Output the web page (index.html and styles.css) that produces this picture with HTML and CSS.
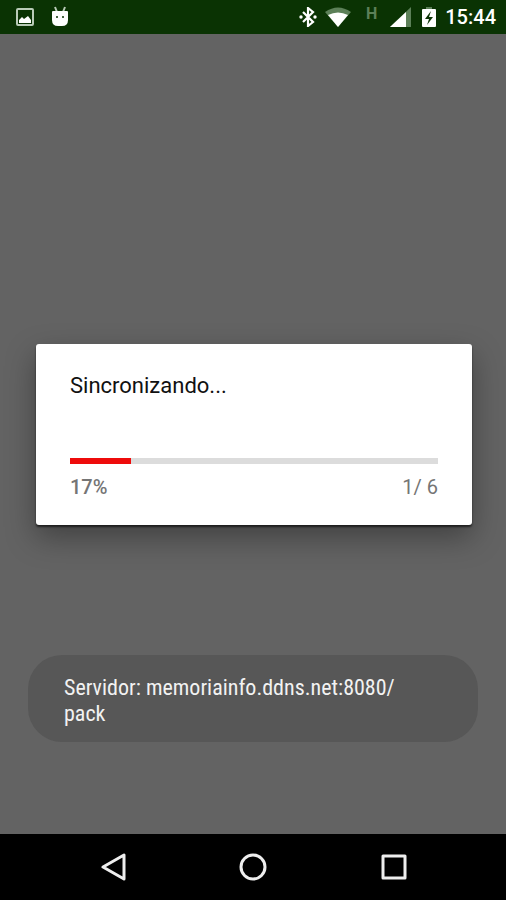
FILE: index.html
```
<!DOCTYPE html>
<html lang="es">
<head>
    <meta charset="UTF-8">
    <meta name="viewport" content="width=device-width, initial-scale=1.0">
    <title>Sincronizando</title>
    <link rel="stylesheet" href="styles.css">
</head>
<body>
    <header class="status-bar">
        <div class="notifications">
            <svg width="18" height="18" viewBox="0 0 18 18">
                <rect x="1" y="1" width="16" height="16" rx="1" fill="none" stroke="#b9cbb7" stroke-width="2"/>
                <path d="M3 15v-3l3-3 2 2 4-3 3 4v3z" fill="#fff"/>
            </svg>
            <svg width="18" height="22" viewBox="0 0 18 22">
                <path d="M4 1l2 5M14 1l-2 5" stroke="#b9cbb7" stroke-width="2"/>
                <path d="M1 6q0-1 1-1h14q1 0 1 1v8q0 6-6 6H7q-6 0-6-6z" fill="#fff"/>
                <circle cx="6" cy="11" r="1" fill="#0a3303"/>
                <circle cx="12" cy="11" r="1" fill="#0a3303"/>
            </svg>
        </div>
        <div class="system">
            <svg width="18" height="20" viewBox="0 0 18 20">
                <path d="M4 5l10 10-5 4V1l5 4L4 15" fill="none" stroke="#fff" stroke-width="2.2"/>
                <circle cx="2" cy="10" r="1.7" fill="#fff"/>
                <circle cx="16" cy="10" r="1.7" fill="#fff"/>
            </svg>
            <svg class="wifi" width="26" height="20" viewBox="0 0 26 20">
                <path d="M0 5Q13-4 26 5L13 20z" fill="#5c8058"/>
                <path d="M3 8Q13 3 23 8L13 20z" fill="#fff"/>
            </svg>
            <span class="network">H</span>
            <svg class="signal" width="22" height="20" viewBox="0 0 22 20">
                <path d="M22 0v20H1z" fill="#5c8058"/>
                <path d="M17 5v15H1z" fill="#fff"/>
            </svg>
            <svg class="battery" width="14" height="20" viewBox="0 0 14 20">
                <path d="M4 0h6v3H4z" fill="#5c8058"/>
                <rect y="2" width="14" height="18" rx="1" fill="#fff"/>
                <path d="M9 4l-6 8h4l-2 6 6-8H7z" fill="#0a3303"/>
            </svg>
            <time class="clock">15:44</time>
        </div>
    </header>

    <main class="screen">
        <section class="dialog" role="dialog" aria-labelledby="title">
            <h1 id="title">Sincronizando...</h1>
            <progress aria-labelledby="title" value="1" max="6"></progress>
            <div class="progress-info">
                <span class="percent">17%</span>
                <span>1/ 6</span>
            </div>
        </section>
        <div class="toast" role="status">Servidor: memoriainfo.ddns.net:8080/<br>pack</div>
    </main>

    <nav class="nav-bar">
        <button type="button" aria-label="Atrás">
            <svg width="28" height="28" viewBox="0 0 28 28"><path d="M25 2v24L4 14z"/></svg>
        </button>
        <button type="button" aria-label="Inicio">
            <svg width="28" height="28" viewBox="0 0 28 28"><circle cx="14" cy="14" r="12"/></svg>
        </button>
        <button type="button" aria-label="Recientes">
            <svg width="28" height="28" viewBox="0 0 28 28"><path d="M4 3h22v22H4z"/></svg>
        </button>
    </nav>
</body>
</html>
```
FILE: styles.css
```
* {
    box-sizing: border-box;
}
body {
    display: flex;
    flex-direction: column;
    min-height: 100vh;
    margin: 0;
    background-color: #636363;
    font-family: Roboto, sans-serif;
}
.status-bar {
    display: flex;
    justify-content: space-between;
    align-items: center;
    height: 34px;
    padding: 0 10px 0 16px;
    background-color: #0a3303;
    color: white;
}
.notifications, .system {
    display: flex;
    align-items: center;
}
.notifications {
    gap: 17px;
}
.wifi {
    margin-left: 8px;
}
.network {
    align-self: flex-start;
    margin-left: 15px;
    color: #5c8058;
    font-size: 16px;
    line-height: 18px;
    font-weight: bold;
}
.signal {
    margin-left: 12px;
}
.battery {
    margin-left: 11px;
}
.clock {
    margin-left: 9px;
    font-size: 20px;
    font-weight: 500;
}
.screen {
    position: relative;
    flex: 1;
    display: flex;
    align-items: center;
    padding: 0 34px 0 36px;
}
.dialog {
    flex: 1;
    padding: 26px 34px;
    border-radius: 3px;
    background-color: white;
    box-shadow: 0 2px 2px rgba(0, 0, 0, 0.6), 0 12px 30px rgba(0, 0, 0, 0.35);
}
h1 {
    margin: 0 0 56px;
    color: #111111;
    font-size: 22px;
    line-height: 32px;
    font-weight: normal;
}
progress {
    display: block;
    width: 100%;
    height: 6px;
    border: none;
    background-color: #dcdcdc;
    appearance: none;
}
progress::-webkit-progress-bar {
    background-color: #dcdcdc;
}
progress::-webkit-progress-value {
    background-color: #ee0b0b;
}
.progress-info {
    display: flex;
    justify-content: space-between;
    margin-top: 11px;
    color: #757575;
    font-size: 20px;
    line-height: 24px;
}
.percent {
    font-weight: 500;
}
/* sits over the page, above the navigation bar */
.toast {
    position: absolute;
    left: 28px;
    right: 28px;
    bottom: 92px;
    padding: 20px 36px 15px;
    border-radius: 34px;
    background-color: #575757;
    color: #f2f2f2;
    font-family: "Roboto Condensed", Roboto, sans-serif;
    font-size: 22px;
    line-height: 26px;
}
.nav-bar {
    display: flex;
    justify-content: center;
    align-items: center;
    gap: 112px;
    height: 66px;
    background-color: black;
}
.nav-bar button {
    display: flex;
    padding: 0;
    border: none;
    background: none;
}
.nav-bar path, .nav-bar circle {
    fill: none;
    stroke: #eeeeee;
    stroke-width: 3;
    stroke-linejoin: round;
}
```
